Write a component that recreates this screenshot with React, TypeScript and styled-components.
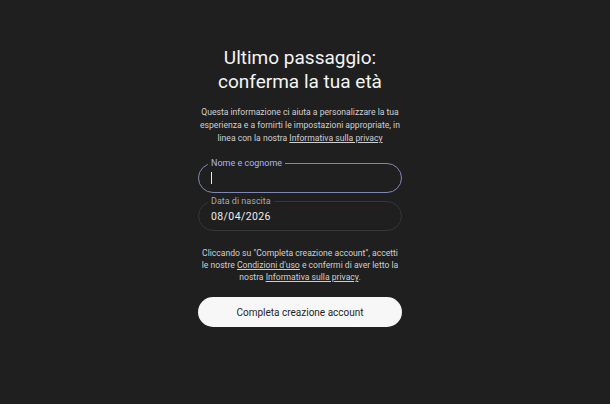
import styled, { createGlobalStyle } from 'styled-components';

const GlobalStyle = createGlobalStyle`
  html, body {
    margin: 0;
    padding: 0;
    background: #1f1f1f;
  }
  body {
    font-family: Roboto, "Liberation Sans", sans-serif;
    color: #e8e8e8;
  }
`;

const Page = styled.div`
  min-height: 404px;
  display: flex;
  justify-content: center;
  padding-right: 10px;
  box-sizing: border-box;
  background: #1f1f1f;
`;

const Column = styled.div`
  width: 204px;
  padding-top: 46px;
  display: flex;
  flex-direction: column;
  align-items: stretch;
`;

const Title = styled.h1`
  margin: 0;
  font-size: 19px;
  line-height: 24px;
  font-weight: 400;
  text-align: center;
  color: #f4f4f4;
`;

const Paragraph = styled.p<{ $gap: number; $lh: number }>`
  margin: ${p => p.$gap}px -10px 0;
  font-size: 8.6px;
  line-height: ${p => p.$lh}px;
  text-align: center;
  color: #cfcfcf;
  white-space: nowrap;
`;

const Link = styled.a`
  color: inherit;
  text-decoration: underline;
  text-underline-offset: 1px;
`;

const Field = styled.div<{ $focused?: boolean; $gap: number }>`
  position: relative;
  margin-top: ${p => p.$gap}px;
  height: 30px;
  box-sizing: border-box;
  border: 1px solid ${p => (p.$focused ? '#7f88b4' : '#363636')};
  border-radius: 15px;
  display: flex;
  align-items: center;
  padding: 0 12px;
`;

const FieldLabel = styled.span<{ $focused?: boolean }>`
  position: absolute;
  top: -7px;
  left: 9px;
  padding: 0 3px;
  background: #1f1f1f;
  font-size: 9px;
  line-height: 12px;
  color: ${p => (p.$focused ? '#a9b4f2' : '#a8a8a8')};
`;

const Caret = styled.span`
  width: 1px;
  height: 12px;
  background: #e6e6e6;
`;

const Value = styled.span`
  font-size: 10.5px;
  color: #ededed;
  letter-spacing: 0.4px;
`;

const SubmitButton = styled.button`
  margin-top: 14px;
  height: 30px;
  border: none;
  border-radius: 15px;
  background: #f7f7f7;
  color: #1f1f1f;
  font-family: inherit;
  font-size: 10px;
  cursor: pointer;
`;

export default function App() {
  return (
    <>
      <GlobalStyle />
      <Page>
        <Column>
          <Title>
            Ultimo passaggio:
            <br />
            conferma la tua età
          </Title>
          <Paragraph $gap={12} $lh={13}>
            Questa informazione ci aiuta a personalizzare la tua
            <br />
            esperienza e a fornirti le impostazioni appropriate, in
            <br />
            linea con la nostra <Link>Informativa sulla privacy</Link>
          </Paragraph>
          <Field $focused $gap={18}>
            <FieldLabel $focused>Nome e cognome</FieldLabel>
            <Caret />
          </Field>
          <Field $gap={8}>
            <FieldLabel>Data di nascita</FieldLabel>
            <Value>08/04/2026</Value>
          </Field>
          <Paragraph $gap={16} $lh={12}>
            Cliccando su "Completa creazione account", accetti
            <br />
            le nostre <Link>Condizioni d'uso</Link> e confermi di aver letto la
            <br />
            nostra <Link>Informativa sulla privacy</Link>.
          </Paragraph>
          <SubmitButton>Completa creazione account</SubmitButton>
        </Column>
      </Page>
    </>
  );
}
